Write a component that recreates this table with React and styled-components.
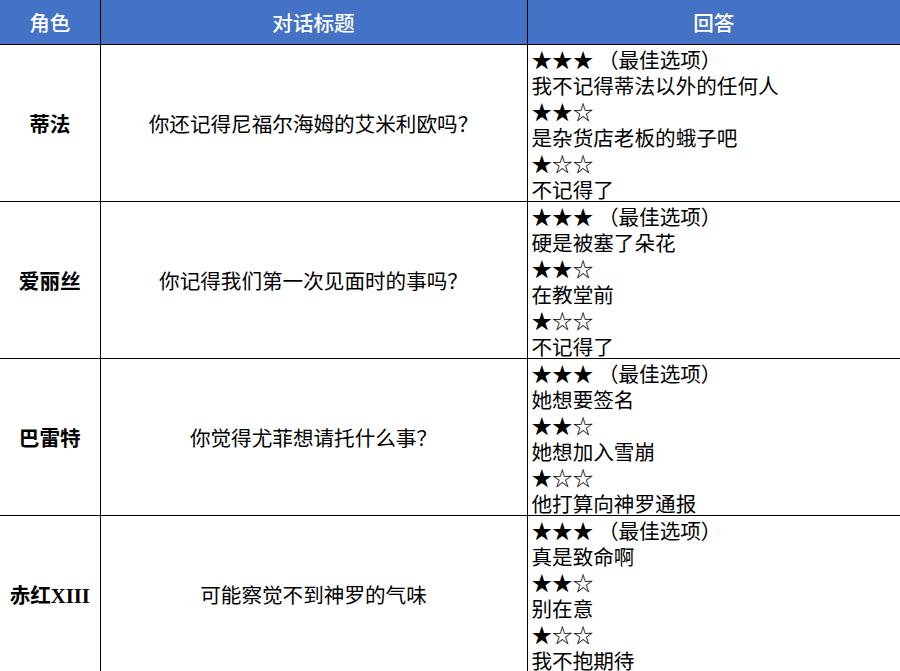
import React from "react";
import styled, { createGlobalStyle } from "styled-components";

const GlobalStyle = createGlobalStyle`
    html, body {
        margin: 0;
        padding: 0;
        background: #ffffff;
    }
    body {
        font-family: "Noto Sans CJK SC", "Liberation Serif", serif;
        color: #000000;
    }
`
const Table = styled.table`
    width: 900px;
    border-collapse: collapse;
    table-layout: fixed;
    font-size: 20.6px;
`
const HeadCell = styled.th`
    height: 44px;
    padding: 0;
    background: #4472c4;
    color: #ffffff;
    font-weight: 500;
    text-align: center;
    border: 1px solid #000000;
    border-top: none;
    &:first-child { border-left: none; }
    &:last-child { border-right: none; }
`
const Cell = styled.td`
    padding: ${(p) => (p.$answer ? "0 4px" : "0")};
    text-align: ${(p) => (p.$answer ? "left" : "center")};
    vertical-align: middle;
    font-weight: ${(p) => (p.$bold ? 700 : 400)};
    font-family: ${(p) => (p.$bold ? '"Liberation Serif", "Noto Sans CJK SC", serif' : "inherit")};
    border: 1px solid #000000;
    &:first-child { border-left: none; }
    &:last-child { border-right: none; }
`
const Line = styled.div`
    box-sizing: border-box;
    height: 26px;
    padding-top: 2px;
    line-height: 24px;
    white-space: nowrap;
`

const rows = [
    {
        role: "蒂法",
        title: "你还记得尼福尔海姆的艾米利欧吗？",
        answers: ["我不记得蒂法以外的任何人", "是杂货店老板的蛾子吧", "不记得了"],
    },
    {
        role: "爱丽丝",
        title: "你记得我们第一次见面时的事吗？",
        answers: ["硬是被塞了朵花", "在教堂前", "不记得了"],
    },
    {
        role: "巴雷特",
        title: "你觉得尤菲想请托什么事？",
        answers: ["她想要签名", "她想加入雪崩", "他打算向神罗通报"],
    },
    {
        role: "赤红XIII",
        title: "可能察觉不到神罗的气味",
        answers: ["真是致命啊", "别在意", "我不抱期待"],
    },
];

const stars = ["★★★ （最佳选项）", "★★☆", "★☆☆"];

export default function App() {
    return (
        <>
            <GlobalStyle />
            <Table>
                <colgroup>
                    <col style={{ width: 100 }} />
                    <col style={{ width: 427 }} />
                    <col style={{ width: 373 }} />
                </colgroup>
                <thead>
                    <tr>
                        <HeadCell>角色</HeadCell>
                        <HeadCell>对话标题</HeadCell>
                        <HeadCell>回答</HeadCell>
                    </tr>
                </thead>
                <tbody>
                    {rows.map((r) => (
                        <tr key={r.role}>
                            <Cell $bold>{r.role}</Cell>
                            <Cell>{r.title}</Cell>
                            <Cell $answer>
                                {r.answers.map((a, i) => (
                                    <React.Fragment key={a}>
                                        <Line>{stars[i]}</Line>
                                        <Line>{a}</Line>
                                    </React.Fragment>
                                ))}
                            </Cell>
                        </tr>
                    ))}
                </tbody>
            </Table>
        </>
    );
}
